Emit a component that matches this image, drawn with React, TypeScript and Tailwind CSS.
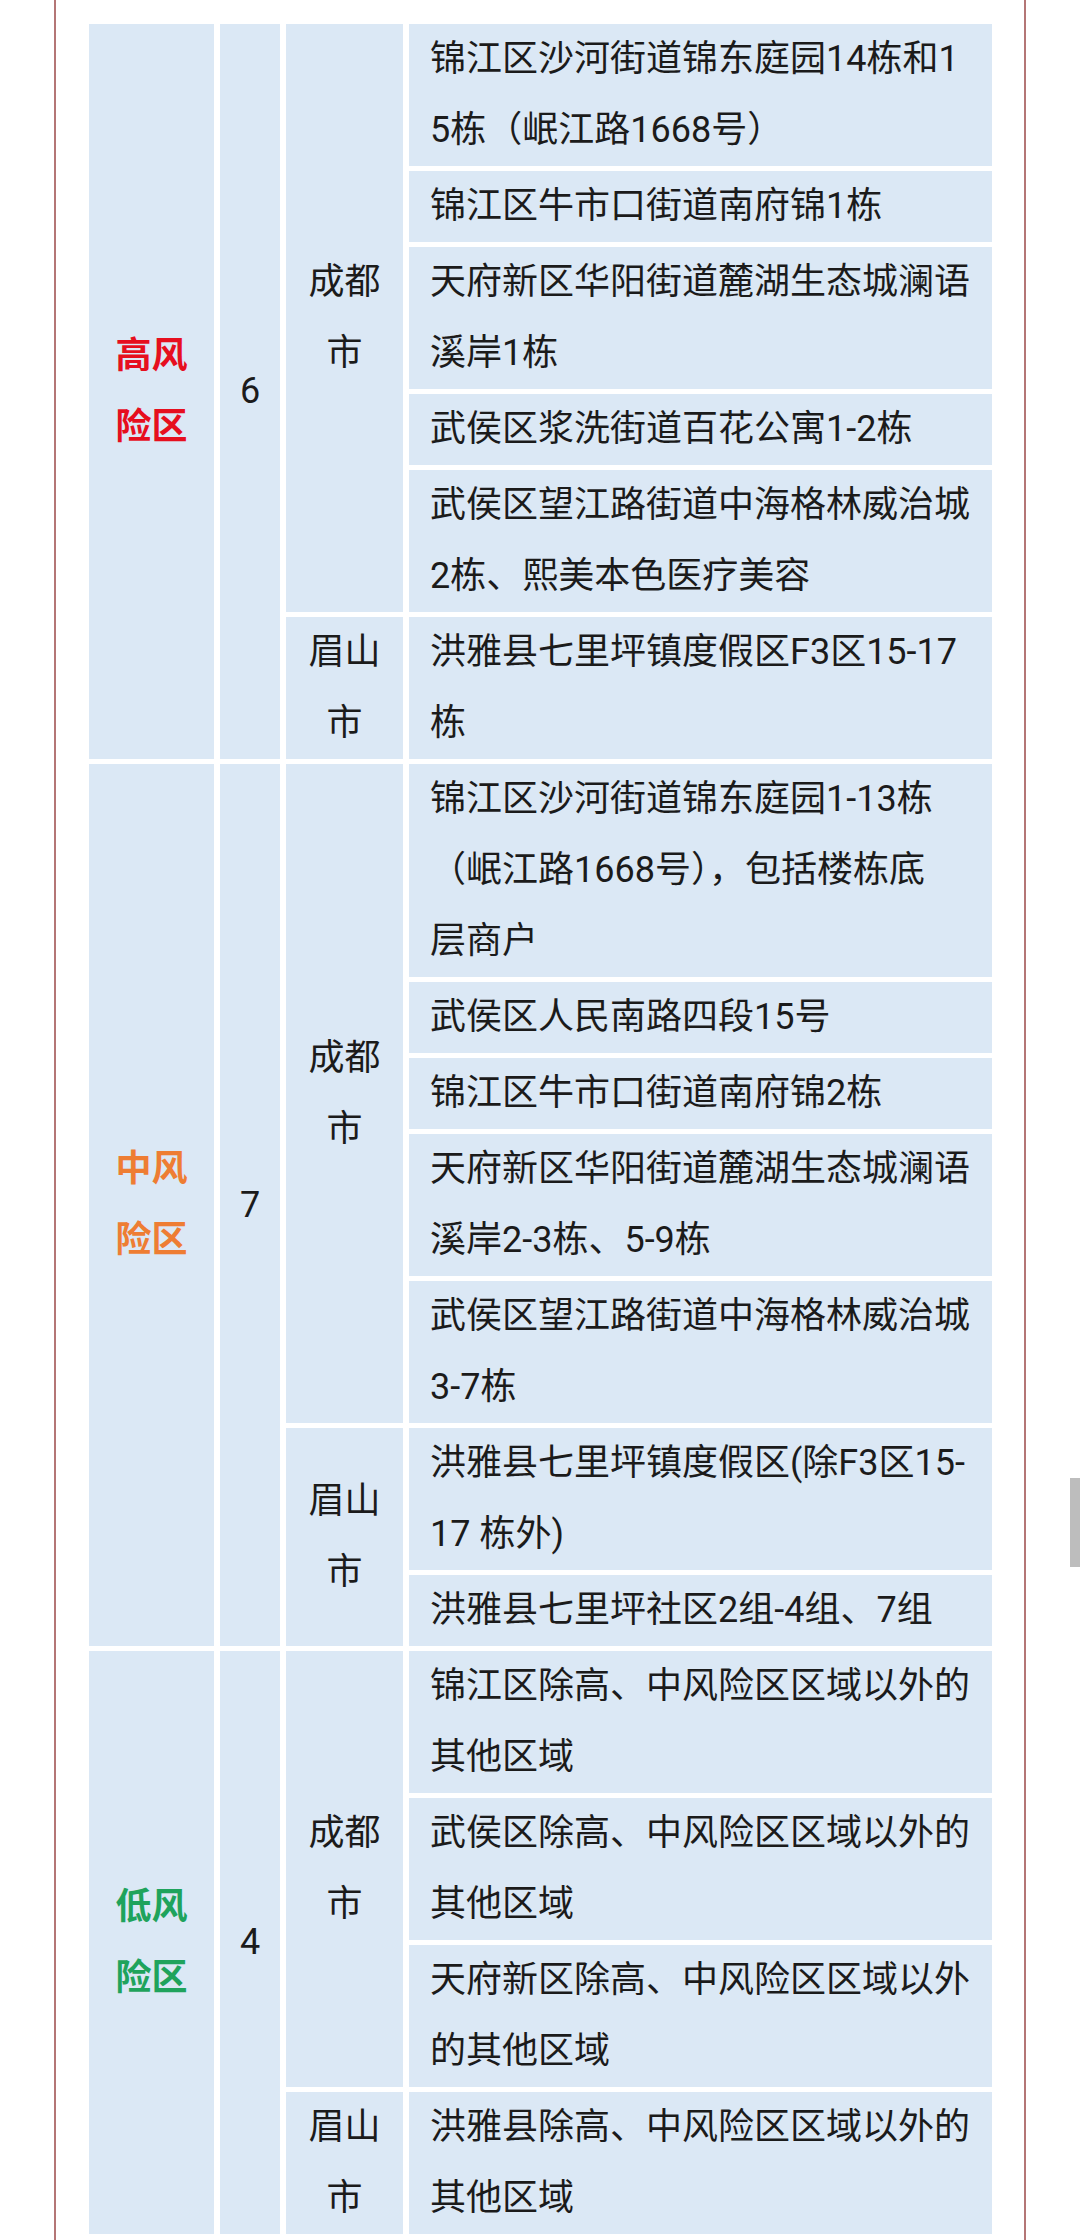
import React from "react";

type Place = {
  lines: string[];
};

type City = {
  name: string[];
  places: Place[];
};

type Level = {
  label: string[];
  color: string;
  count: string;
  cities: City[];
};

const levels: Level[] = [
  {
    label: ["高风", "险区"],
    color: "text-[#e60f1e]",
    count: "6",
    cities: [
      {
        name: ["成都", "市"],
        places: [
          { lines: ["锦江区沙河街道锦东庭园14栋和1", "5栋（岷江路1668号）"] },
          { lines: ["锦江区牛市口街道南府锦1栋"] },
          { lines: ["天府新区华阳街道麓湖生态城澜语", "溪岸1栋"] },
          { lines: ["武侯区浆洗街道百花公寓1-2栋"] },
          { lines: ["武侯区望江路街道中海格林威治城", "2栋、熙美本色医疗美容"] },
        ],
      },
      {
        name: ["眉山", "市"],
        places: [{ lines: ["洪雅县七里坪镇度假区F3区15-17", "栋"] }],
      },
    ],
  },
  {
    label: ["中风", "险区"],
    color: "text-[#ee7d33]",
    count: "7",
    cities: [
      {
        name: ["成都", "市"],
        places: [
          { lines: ["锦江区沙河街道锦东庭园1-13栋", "（岷江路1668号），包括楼栋底", "层商户"] },
          { lines: ["武侯区人民南路四段15号"] },
          { lines: ["锦江区牛市口街道南府锦2栋"] },
          { lines: ["天府新区华阳街道麓湖生态城澜语", "溪岸2-3栋、5-9栋"] },
          { lines: ["武侯区望江路街道中海格林威治城", "3-7栋"] },
        ],
      },
      {
        name: ["眉山", "市"],
        places: [
          { lines: ["洪雅县七里坪镇度假区(除F3区15-", "17 栋外)"] },
          { lines: ["洪雅县七里坪社区2组-4组、7组"] },
        ],
      },
    ],
  },
  {
    label: ["低风", "险区"],
    color: "text-[#1fa35c]",
    count: "4",
    cities: [
      {
        name: ["成都", "市"],
        places: [
          { lines: ["锦江区除高、中风险区区域以外的", "其他区域"] },
          { lines: ["武侯区除高、中风险区区域以外的", "其他区域"] },
          { lines: ["天府新区除高、中风险区区域以外", "的其他区域"] },
        ],
      },
      {
        name: ["眉山", "市"],
        places: [{ lines: ["洪雅县除高、中风险区区域以外的", "其他区域"] }],
      },
    ],
  },
];

const cellBg = "bg-[#dbe8f5] p-0 align-middle";

function Lines({ lines }: { lines: string[] }) {
  return (
    <>
      {lines.map((line, i) => (
        <div key={i} className="whitespace-nowrap">
          {line}
        </div>
      ))}
    </>
  );
}

function LevelRows({ level }: { level: Level }) {
  const total = level.cities.reduce((n, c) => n + c.places.length, 0);
  const rows: React.ReactNode[] = [];

  level.cities.forEach((city, ci) => {
    city.places.forEach((place, pi) => {
      rows.push(
        <tr key={`${ci}-${pi}`}>
          {ci === 0 && pi === 0 && (
            <>
              <td rowSpan={total} className={`${cellBg} text-center font-bold ${level.color}`}>
                <Lines lines={level.label} />
              </td>
              <td rowSpan={total} className={`${cellBg} text-center`}>
                {level.count}
              </td>
            </>
          )}
          {pi === 0 && (
            <td rowSpan={city.places.length} className={`${cellBg} text-center`}>
              <Lines lines={city.name} />
            </td>
          )}
          <td className={`${cellBg} pl-[21px]`}>
            <Lines lines={place.lines} />
          </td>
        </tr>
      );
    });
  });

  return <>{rows}</>;
}

export default function App() {
  return (
    <div
      className="relative w-[1080px] h-[2240px] overflow-hidden bg-white text-[36px] leading-[71px] text-[#1b1b1b]"
      style={{ fontFamily: '"Roboto", "Noto Sans CJK SC", sans-serif' }}
    >
      <div className="ml-[54px] w-[972px] h-full border-x-2 border-[#b47676] pt-[19px]">
        <table className="ml-[27px] w-[915px] table-fixed border-separate border-spacing-x-[6px] border-spacing-y-[5px]">
          <colgroup>
            <col className="w-[125px]" />
            <col className="w-[60px]" />
            <col className="w-[117px]" />
            <col className="w-[583px]" />
          </colgroup>
          <tbody>
            {levels.map((level, i) => (
              <LevelRows key={i} level={level} />
            ))}
          </tbody>
        </table>
      </div>
      <div className="absolute right-0 top-[1478px] w-[10px] h-[89px] bg-[#bdbdbd]" />
    </div>
  );
}
